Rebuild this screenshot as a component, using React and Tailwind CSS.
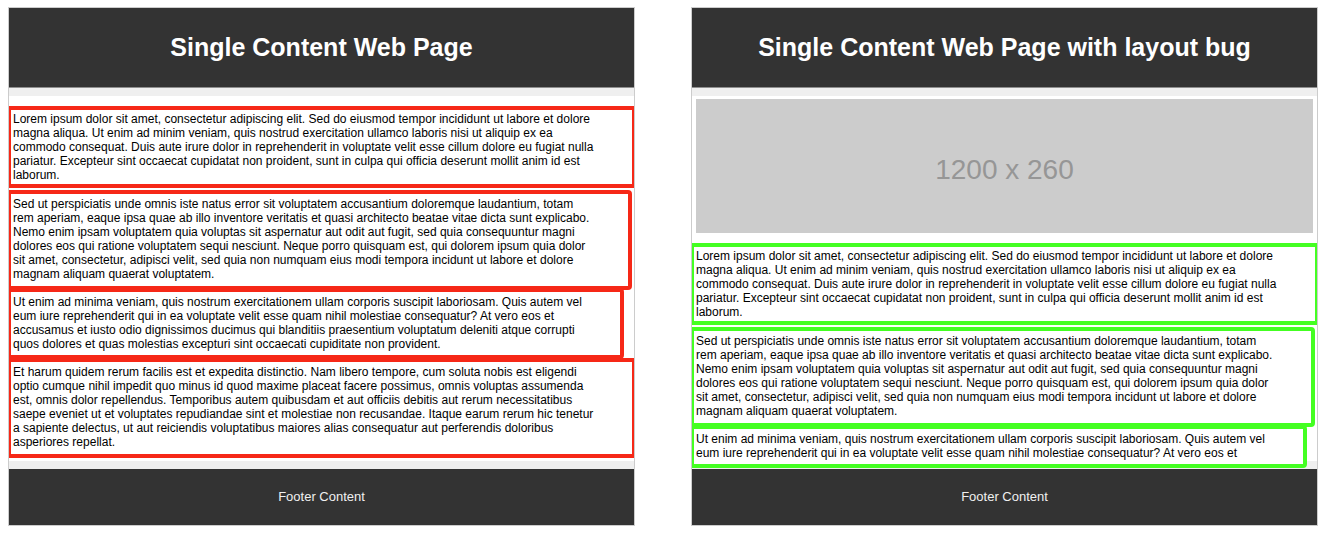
const passages = {
  lorem: `Lorem ipsum dolor sit amet, consectetur adipiscing elit. Sed do eiusmod tempor incididunt ut labore et dolore
magna aliqua. Ut enim ad minim veniam, quis nostrud exercitation ullamco laboris nisi ut aliquip ex ea
commodo consequat. Duis aute irure dolor in reprehenderit in voluptate velit esse cillum dolore eu fugiat nulla
pariatur. Excepteur sint occaecat cupidatat non proident, sunt in culpa qui officia deserunt mollit anim id est
laborum.`,
  sed: `Sed ut perspiciatis unde omnis iste natus error sit voluptatem accusantium doloremque laudantium, totam
rem aperiam, eaque ipsa quae ab illo inventore veritatis et quasi architecto beatae vitae dicta sunt explicabo.
Nemo enim ipsam voluptatem quia voluptas sit aspernatur aut odit aut fugit, sed quia consequuntur magni
dolores eos qui ratione voluptatem sequi nesciunt. Neque porro quisquam est, qui dolorem ipsum quia dolor
sit amet, consectetur, adipisci velit, sed quia non numquam eius modi tempora incidunt ut labore et dolore
magnam aliquam quaerat voluptatem.`,
  minima: `Ut enim ad minima veniam, quis nostrum exercitationem ullam corporis suscipit laboriosam. Quis autem vel
eum iure reprehenderit qui in ea voluptate velit esse quam nihil molestiae consequatur? At vero eos et`,
  accusamus: `
accusamus et iusto odio dignissimos ducimus qui blanditiis praesentium voluptatum deleniti atque corrupti
quos dolores et quas molestias excepturi sint occaecati cupiditate non provident.`,
  harum: `Et harum quidem rerum facilis est et expedita distinctio. Nam libero tempore, cum soluta nobis est eligendi
optio cumque nihil impedit quo minus id quod maxime placeat facere possimus, omnis voluptas assumenda
est, omnis dolor repellendus. Temporibus autem quibusdam et aut officiis debitis aut rerum necessitatibus
saepe eveniet ut et voluptates repudiandae sint et molestiae non recusandae. Itaque earum rerum hic tenetur
a sapiente delectus, ut aut reiciendis voluptatibus maiores alias consequatur aut perferendis doloribus
asperiores repellat.`,
};

function Panel({ title, children }) {
  return (
    <section className="flex min-w-0 flex-1 flex-col border border-[#cccccc] bg-[#efefef]">
      <header className="mb-2 border-b border-[#8f8f8f] bg-[#333333] py-6 text-center text-white">
        <h1 className="text-[25px] leading-[31px] font-bold">{title}</h1>
      </header>
      <main className="mb-2 flex flex-1 flex-col bg-white">{children}</main>
      <footer className="bg-[#333333] py-5 text-center text-[13px] text-[#f0f0f0]">
        <p className="leading-4">Footer Content</p>
      </footer>
    </section>
  );
}

function Passage({ className, children }) {
  return (
    <p className={`border-x-2 border-y-4 px-0.5 leading-[14px] whitespace-pre-line ${className}`}>
      {children}
    </p>
  );
}

export default function App() {
  return (
    <div className="flex items-stretch gap-14 bg-white px-2 pt-[7px] pb-2 font-['Liberation_Sans',Arial,sans-serif] text-[12px] text-black">
      <Panel title="Single Content Web Page">
        <div className="flex flex-col pt-[10px] pb-[3px]">
          <Passage className="border-[#f62817] py-0.5">{passages.lorem}</Passage>
          <Passage className="mt-0.5 mr-0.5 rounded-r-sm border-r-4 border-[#f62817] pt-[3px] pb-[5px]">
            {passages.sed}
          </Passage>
          <Passage className="-mt-0.5 mr-[10px] rounded-r-sm border-r-4 border-[#f62817] pt-[3px] pb-1">
            {passages.minima + passages.accusamus}
          </Passage>
          <Passage className="-mt-px border-[#f62817] pt-[3px] pb-[5px]">{passages.harum}</Passage>
        </div>
      </Panel>
      <Panel title="Single Content Web Page with layout bug">
        <div className="mx-1 mt-[3px] mb-[10px] flex h-[134px] items-center justify-center bg-[#cccccc] pt-2 text-[28px] leading-8 text-[#969696]">
          1200 x 260
        </div>
        <Passage className="border-[#44ff22] py-0.5">{passages.lorem}</Passage>
        <Passage className="mt-0.5 mr-0.5 rounded-r-sm border-r-4 border-[#44ff22] pt-[3px] pb-[5px]">
          {passages.sed}
        </Passage>
        <Passage className="-mt-0.5 -mb-2 mr-[10px] rounded-r-sm border-r-4 border-[#44ff22] bg-white pt-[3px] pb-1">
          {passages.minima}
        </Passage>
      </Panel>
    </div>
  );
}
